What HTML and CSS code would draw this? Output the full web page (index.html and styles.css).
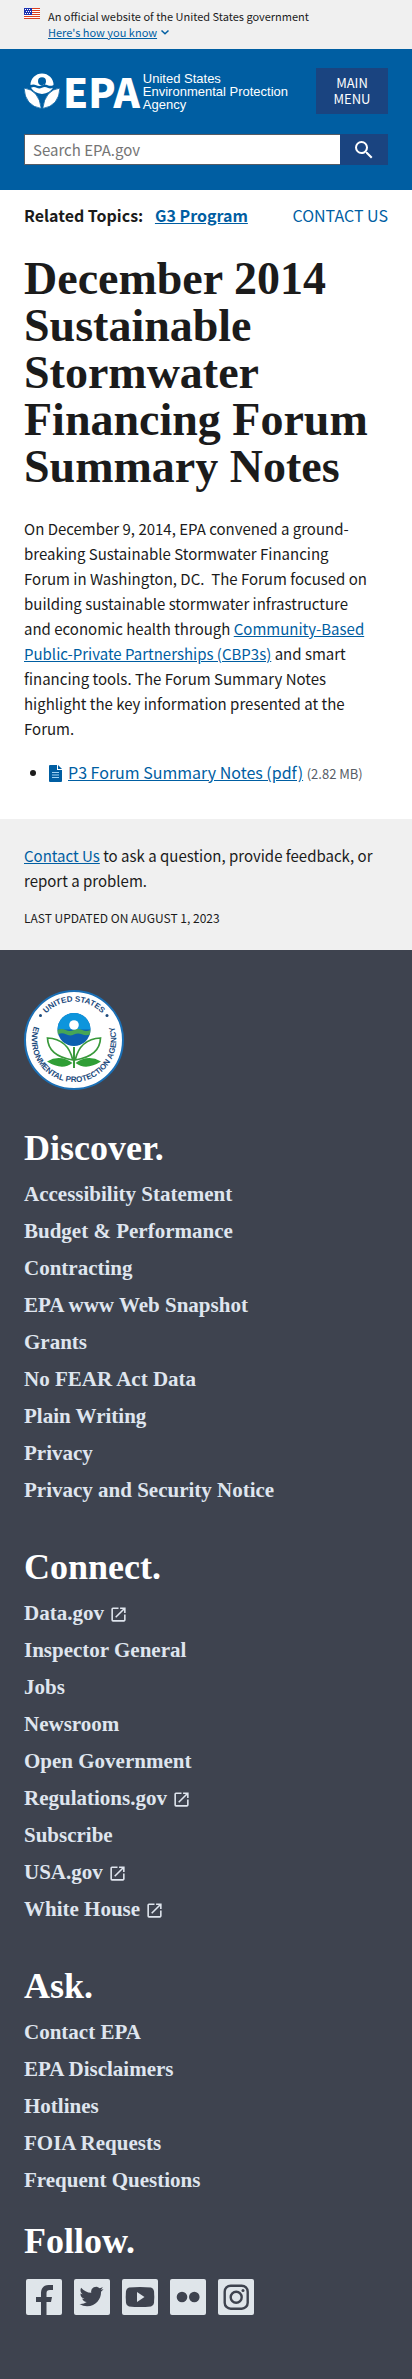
FILE: index.html
```html
<!DOCTYPE html>
<html lang="en">
<head>
<meta charset="utf-8">
<meta name="viewport" content="width=device-width, initial-scale=1">
<title>December 2014 Sustainable Stormwater Financing Forum Summary Notes | US EPA</title>
<link rel="stylesheet" href="styles.css">
</head>
<body>
<svg class="sprite" aria-hidden="true">
  <symbol id="launch" viewBox="0 0 24 24"><path d="M19 19H5V5h7V3H5a2 2 0 0 0-2 2v14a2 2 0 0 0 2 2h14c1.100 0 2-.9 2-2v-7h-2v7zM14 3v2h3.590l-9.830 9.830 1.410 1.410L19 6.410V10h2V3h-7z"/></symbol>
</svg>

<section class="banner" aria-label="Official government website">
  <svg class="flag" viewBox="0 0 16 11" aria-hidden="true">
    <rect width="16" height="11" fill="#fff"/>
    <path fill="#db3e1f" d="M0 0h16v1H0zM0 2h16v1H0zM0 4h16v1H0zM0 6h16v1H0zM0 8h16v1H0zM0 10h16v1H0z"/>
    <rect width="8" height="7" fill="#1e33b1"/>
    <path fill="#fff" d="M1 1h1v1H1zM3 1h1v1H3zM5 1h1v1H5zM2 3h1v1H2zM4 3h1v1H4zM6 3h1v1H6zM1 5h1v1H1zM3 5h1v1H3zM5 5h1v1H5z"/>
  </svg>
  <div>
    <p class="banner-text">An official website of the United States government</p>
    <button class="banner-toggle" type="button"><span>Here's how you know</span>
      <svg viewBox="0 0 10 10" aria-hidden="true"><path d="M1.500 3.500 5 6.800l3.500-3.300" fill="none" stroke="currentColor" stroke-width="1.500"/></svg>
    </button>
  </div>
</section>

<header class="header">
  <div class="header-top">
    <a class="logo" href="#" aria-label="US EPA home">
      <svg class="logo-flower" viewBox="0 0 36 36" aria-hidden="true">
        <path fill="#fff" fill-rule="evenodd" d="M6.500 12A11.500 11.500 0 0 1 29.500 12Q26.600 13.600 23.700 12.200Q20.800 10.800 18 12.200Q15.200 13.600 12.300 12.200Q9.400 10.800 6.500 12zM18 4.200a4 4 0 1 0 0 8a4 4 0 0 0 0-8z"/>
        <path fill="#fff" d="M7 14.800Q9.800 13.400 12.500 14.800Q15.300 16.200 18 14.800Q20.800 13.400 23.500 14.800Q26.300 16.200 29 14.800Q26 20 18 21Q10 20 7 14.800z"/>
        <path fill="#fff" d="M0 15Q15 17 17.300 35.500Q1 33 0 15zM36 15Q21 17 18.700 35.500Q35 33 36 15z" stroke="#005ea2" stroke-width=".8"/>
      </svg>
      <span class="logo-name">EPA</span>
      <span class="logo-text">United States<br>Environmental Protection<br>Agency</span>
    </a>
    <button class="menu-button" type="button">Main Menu</button>
  </div>
  <form class="search" role="search">
    <input type="search" aria-label="Search EPA.gov" placeholder="Search EPA.gov">
    <button type="submit" aria-label="Search">
      <svg viewBox="0 0 24 24" aria-hidden="true"><path fill="#fff" d="M15.500 14h-.79l-.28-.27A6.471 6.471 0 0 0 16 9.500 6.500 6.500 0 1 0 9.500 16c1.610 0 3.090-.59 4.230-1.570l.27.280v.790l5 4.990L20.490 19l-4.990-5zm-6 0C7.010 14 5 11.990 5 9.500S7.010 5 9.500 5 14 7.010 14 9.500 11.990 14 9.500 14z"/></svg>
    </button>
  </form>
</header>

<main class="main">
  <div class="topics">
    <p class="related"><span>Related Topics:</span> <a href="#">G3 Program</a></p>
    <a class="contact-link" href="#">Contact Us</a>
  </div>
  <h1>December 2014 Sustainable Stormwater Financing Forum Summary Notes</h1>
  <p class="intro">On December 9, 2014, EPA convened a ground-breaking Sustainable Stormwater Financing Forum in Washington, DC.&nbsp; The Forum focused on building sustainable stormwater infrastructure and economic health through <a href="#">Community-Based Public-Private Partnerships (CBP3s)</a> and smart financing tools. The Forum Summary Notes highlight the key information presented at the Forum.</p>
  <ul class="files">
    <li><svg class="file-icon" viewBox="0 0 13 17" aria-hidden="true"><path fill="#005ea2" d="M1 0h7v5h5v11a1 1 0 0 1-1 1H1a1 1 0 0 1-1-1V1a1 1 0 0 1 1-1zM9 0l4 4H9z"/><path fill="#9fd3f5" d="M3 7h7v1H3zM3 9.500h7v1H3zM3 12h7v1H3z"/></svg><a href="#">P3 Forum Summary Notes (pdf)</a> <span class="size">(2.82 MB)</span></li>
  </ul>
</main>

<section class="feedback">
  <p><a href="#">Contact Us</a> to ask a question, provide feedback, or report a problem.</p>
  <p class="updated">Last updated on August 1, 2023</p>
</section>

<footer class="footer">
  <svg class="seal" viewBox="0 0 100 100" role="img" aria-label="EPA seal">
    <defs>
      <path id="arc-top" d="M11.500 50a38.500 38.500 0 0 1 77 0"/>
      <path id="arc-bottom" d="M15.800 25.200A42.200 42.200 0 1 0 84.200 25.200"/>
    </defs>
    <circle cx="50" cy="50" r="49" fill="#fff" stroke="#1a6fb5" stroke-width="2"/>
    <g class="seal-text">
      <text><textPath href="#arc-top" startOffset="50%" text-anchor="middle">UNITED STATES</textPath></text>
      <text><textPath href="#arc-bottom" startOffset="50%" text-anchor="middle">ENVIRONMENTAL PROTECTION AGENCY</textPath></text>
    </g>
    <circle cx="16.500" cy="25.500" r="1.500" fill="#1c4a7c"/><circle cx="83" cy="25.500" r="1.500" fill="#1c4a7c"/>
    <circle cx="50" cy="39.500" r="16.500" fill="#0d5fb0"/>
    <path fill="#0d95dc" d="M33.500 39.500a16.500 16.500 0 0 1 33 0z"/>
    <path fill="#46a556" d="M33.500 40q4-2 8.200 0t8.300 0 8.200 0 8.300 0l-.6 4.500q-4 1.500-8-.2t-8 .2-8-.2-8 .2z"/>
    <circle cx="50" cy="35" r="4.800" fill="#fff"/>
    <g fill="#fff" stroke="#39993b" stroke-width="1.700">
      <path d="M48.800 70Q44 49 23.500 48Q24 66 48.800 70zM51.200 70Q56 49 76.500 48Q76 66 51.200 70z"/>
    </g>
    <path fill="#2f9e35" d="M23 71.500Q36 64 48.500 73Q38 81 23 71.500zM77 71.500Q64 64 51.500 73Q62 81 77 71.500z"/>
    <path d="M50 57v21" stroke="#39993b" stroke-width="2"/>
  </svg>

  <nav class="group" aria-labelledby="discover">
    <h2 id="discover">Discover.</h2>
    <ul>
      <li><a href="#">Accessibility Statement</a></li>
      <li><a href="#">Budget &amp; Performance</a></li>
      <li><a href="#">Contracting</a></li>
      <li><a href="#">EPA www Web Snapshot</a></li>
      <li><a href="#">Grants</a></li>
      <li><a href="#">No FEAR Act Data</a></li>
      <li><a href="#">Plain Writing</a></li>
      <li><a href="#">Privacy</a></li>
      <li><a href="#">Privacy and Security Notice</a></li>
    </ul>
  </nav>
  <nav class="group" aria-labelledby="connect">
    <h2 id="connect">Connect.</h2>
    <ul>
      <li><a href="#">Data.gov <svg><use href="#launch"/></svg></a></li>
      <li><a href="#">Inspector General</a></li>
      <li><a href="#">Jobs</a></li>
      <li><a href="#">Newsroom</a></li>
      <li><a href="#">Open Government</a></li>
      <li><a href="#">Regulations.gov <svg><use href="#launch"/></svg></a></li>
      <li><a href="#">Subscribe</a></li>
      <li><a href="#">USA.gov <svg><use href="#launch"/></svg></a></li>
      <li><a href="#">White House <svg><use href="#launch"/></svg></a></li>
    </ul>
  </nav>
  <nav class="group" aria-labelledby="ask">
    <h2 id="ask">Ask.</h2>
    <ul>
      <li><a href="#">Contact EPA</a></li>
      <li><a href="#">EPA Disclaimers</a></li>
      <li><a href="#">Hotlines</a></li>
      <li><a href="#">FOIA Requests</a></li>
      <li><a href="#">Frequent Questions</a></li>
    </ul>
  </nav>
  <section class="follow">
    <h2>Follow.</h2>
    <div class="social">
      <a href="#" aria-label="Facebook"><svg viewBox="0 0 36 36"><rect class="tile" width="36" height="36" rx="2"/><path class="mark" d="M15 36V23h-5v-5h5v-4c0-5 3-8 7.500-8H27v5h-3c-2.500 0-3.500 1.200-3.500 3.200V18H26l-1 5h-4.500v13z"/></svg></a>
      <a href="#" aria-label="Twitter"><svg viewBox="0 0 36 36"><rect class="tile" width="36" height="36" rx="2"/><path class="mark" transform="translate(5.500 5.500)" d="M23.950 4.570a10 10 0 0 1-2.820.770 4.960 4.960 0 0 0 2.160-2.720c-.95.550-2 .960-3.130 1.180a4.920 4.920 0 0 0-8.380 4.480C7.690 8.090 4.070 6.130 1.640 3.160a4.820 4.820 0 0 0-.67 2.480c0 1.710.870 3.210 2.190 4.100a4.900 4.900 0 0 1-2.230-.62v.060a4.920 4.920 0 0 0 3.950 4.830 4.990 4.990 0 0 1-2.210.080 4.940 4.940 0 0 0 4.600 3.420A9.870 9.870 0 0 1 0 19.540a13.990 13.990 0 0 0 7.550 2.210c9.050 0 14-7.500 14-13.980 0-.21 0-.42-.02-.63a9.940 9.940 0 0 0 2.460-2.550z"/></svg></a>
      <a href="#" aria-label="YouTube"><svg viewBox="0 0 36 36"><rect class="tile" width="36" height="36" rx="2"/><path class="mark" d="M7 8.500Q18 7.500 29 8.500Q31.500 9 32 12Q32.600 18 32 24Q31.500 27 29 27.500Q18 28.500 7 27.500Q4.500 27 4 24Q3.400 18 4 12Q4.500 9 7 8.500z"/><path class="tile" d="M15 13v10l7.500-5z"/></svg></a>
      <a href="#" aria-label="Flickr"><svg viewBox="0 0 36 36"><rect class="tile" width="36" height="36" rx="2"/><circle class="mark" cx="12" cy="18" r="5.300"/><circle class="mark" cx="24.300" cy="18" r="5.300"/></svg></a>
      <a href="#" aria-label="Instagram"><svg viewBox="0 0 36 36"><rect class="tile" width="36" height="36" rx="2"/><g class="outline"><rect x="6.700" y="6.700" width="23" height="23" rx="6"/><circle cx="18.200" cy="18.200" r="5.500"/></g><circle class="mark" cx="25" cy="11.500" r="1.500"/></svg></a>
    </div>
  </section>
</footer>
</body>
</html>
```
FILE: styles.css
```css
* { box-sizing: border-box; }

:root {
  --blue: #005ea2;
  --navy: #1a4480;
  --ink: #1b1b1b;
  --slate: #3e434f;
  --sans: "Noto Sans CJK SC", "Open Sans", sans-serif;
  --serif: "Liberation Serif", serif;
}

body {
  margin: 0;
  background: #fff;
  color: var(--ink);
  font: 15px/25px var(--sans);
}

p, h1, h2, ul { margin: 0; }
a { color: var(--blue); }
button { font-family: inherit; cursor: pointer; }

.sprite { display: none; }

.banner {
  display: flex;
  gap: 8px;
  padding: 8px 24px 9px;
  background: #f0f0f0;
  font-size: 11px;
  line-height: 16px;
}
.flag { width: 16px; height: 11px; flex: none; }
.banner-toggle {
  display: flex;
  align-items: center;
  gap: 3px;
  padding: 0;
  border: 0;
  background: none;
  color: var(--blue);
  font-size: 11px;
  line-height: 16px;
}
.banner-toggle span { text-decoration: underline; }
.banner-toggle svg { width: 10px; height: 10px; }

.header {
  padding: 19px 24px 25px;
  background: var(--blue);
}
.header-top {
  display: flex;
  align-items: center;
  justify-content: space-between;
}
.logo {
  display: flex;
  align-items: center;
  gap: 3px;
  color: #fff;
  text-decoration: none;
}
.logo-flower { width: 36px; height: 36px; }
.logo-name { font-size: 40px; font-weight: 900; line-height: 36px; }
.logo-text {
  font-family: "Liberation Sans", Arial, sans-serif;
  font-size: 13px;
  line-height: 13px;
  white-space: nowrap;
}
.menu-button {
  width: 72px;
  padding: 7px 12px;
  border: 0;
  background: var(--navy);
  color: #fff;
  font-size: 13px;
  line-height: 16px;
  text-transform: uppercase;
}
.search { display: flex; margin-top: 20px; }
.search input {
  flex: 1;
  min-width: 0;
  height: 31px;
  padding: 0 8px;
  border: 1px solid #565c65;
  border-right: 0;
  border-radius: 0;
  background: #fff;
  font: 15px/25px var(--sans);
  appearance: none;
}
.search input::placeholder { color: #757575; }
.search button {
  display: grid;
  place-items: center;
  width: 48px;
  padding: 0;
  border: 0;
  background: var(--navy);
}
.search svg { width: 24px; height: 24px; }

.main { padding: 13px 24px 33px; }
.topics { display: flex; justify-content: space-between; font-size: 16px; }
.related { font-weight: 700; }
.related span { margin-right: 8px; }
.contact-link { text-decoration: none; text-transform: uppercase; }

h1 {
  margin: 27px 0 26px;
  font: 700 46px/47px var(--serif);
}
.intro { max-width: 352px; }
.files { margin-top: 19px; padding-left: 25px; font-size: 16px; }
.file-icon { width: 13px; height: 17px; margin-right: 6px; vertical-align: -3px; }
.size { color: #565c65; font-size: 13px; }

.feedback { padding: 24px 24px 20px; background: #f0f0f0; }
.updated {
  margin-top: 12px;
  font-size: 12px;
  text-transform: uppercase;
}

.footer {
  padding: 40px 24px 65px;
  background: var(--slate);
}
.seal { display: block; width: 100px; height: 100px; }
.seal-text {
  fill: #1c4a7c;
  font: 700 8px "Liberation Sans", Arial, sans-serif;
}
.footer h2 {
  color: #fff;
  font: 700 36px/36px var(--serif);
}
.group { margin-top: 40px; }
.group ul { margin-top: 10px; padding: 0; list-style: none; }
.group li { font: 700 21px/37px var(--serif); }
.group a { color: #dfe5ee; text-decoration: none; }
.group svg { width: 19px; height: 19px; vertical-align: -4px; fill: currentColor; }

.follow { margin-top: 24px; }
.social { display: flex; gap: 12px; margin-top: 20px; padding-left: 2px; }
.social svg { display: block; width: 36px; height: 36px; }
.tile { fill: #dfe5ea; }
.mark { fill: var(--slate); }
.outline { fill: none; stroke: var(--slate); stroke-width: 2.400px; }
```
